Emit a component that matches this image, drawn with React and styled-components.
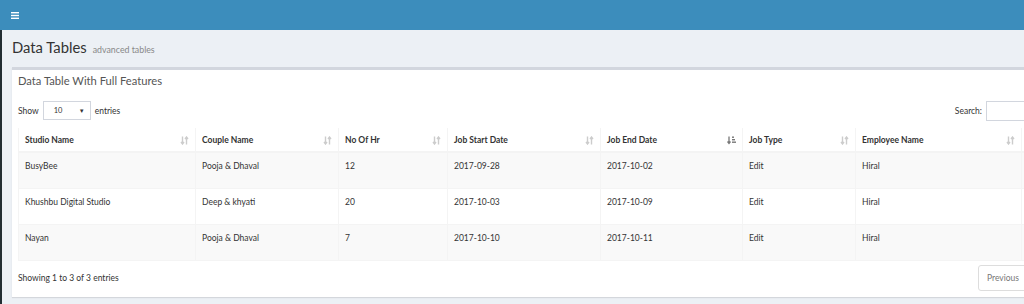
import React from "react";
import styled, { createGlobalStyle } from "styled-components";

const GlobalStyle = createGlobalStyle`
  html, body { margin: 0; padding: 0; overflow: hidden; }
  body {
    background: #ecf0f5;
    font-family: Lato, "Liberation Sans", sans-serif;
    color: #333;
    width: 1024px;
  }
`;

const Page = styled.div`
  width: 1120px;
  display: flex;
  flex-direction: column;
`;

const TopBar = styled.header`
  height: 30px;
  background: #3c8dbc;
  display: flex;
  align-items: center;
  padding-left: 11px;
`;

const Body = styled.div`
  display: flex;
  height: 274px;
`;

const SideStrip = styled.aside`
  width: 2px;
  background: #222d32;
`;

const Content = styled.main`
  flex: 1;
  padding: 0 0 0 10px;
  display: flex;
  flex-direction: column;
`;

const ContentHeader = styled.div`
  display: flex;
  align-items: baseline;
  gap: 6px;
  height: 37px;
  padding-top: 8px;
  box-sizing: border-box;
`;

const H1 = styled.h1`
  margin: 0;
  font-size: 14.8px;
  font-weight: 400;
  color: #333;
`;

const Small = styled.small`
  font-size: 8.8px;
  color: #888;
`;

const Box = styled.section`
  background: #fff;
  border-top: 3px solid #d2d6de;
  box-shadow: 0 1px 1px rgba(0, 0, 0, 0.1);
  width: 1100px;
  height: 230px;
  box-sizing: border-box;
  display: flex;
  flex-direction: column;
`;

const BoxTitle = styled.h3`
  margin: 0;
  padding: 4px 6px 0;
  height: 28px;
  box-sizing: border-box;
  font-size: 11.2px;
  font-weight: 400;
  color: #555;
`;

const BoxBody = styled.div`
  padding: 0 6px;
  display: flex;
  flex-direction: column;
`;

const Controls = styled.div`
  display: flex;
  align-items: center;
  justify-content: space-between;
  height: 25px;
  margin-bottom: 5px;
  font-size: 8.5px;
  width: 1068px;
`;

const Label = styled.label`
  display: flex;
  align-items: center;
  gap: 4px;
`;

const Select = styled.div`
  width: 48px;
  height: 19px;
  box-sizing: border-box;
  border: 1px solid #d2d6de;
  display: flex;
  align-items: center;
  justify-content: space-between;
  padding: 0 5px 0 10px;
  font-size: 7.5px;
`;

const Caret = styled.span`
  font-size: 6px;
`;

const SearchInput = styled.div`
  width: 100px;
  height: 20px;
  box-sizing: border-box;
  border: 1px solid #d2d6de;
  background: #fff;
`;

const Table = styled.table`
  border-collapse: collapse;
  table-layout: fixed;
  width: 1090px;
  font-size: 8.5px;
`;

const Th = styled.th`
  text-align: left;
  font-weight: 700;
  color: #333;
  height: 24px;
  padding: 1px 6px 0;
  border: 1px solid #f4f4f4;
  border-bottom: 2px solid #f4f4f4;
  border-top: none;
  box-sizing: border-box;
`;

const ThInner = styled.div`
  display: flex;
  align-items: center;
  justify-content: space-between;
`;

const Tr = styled.tr`
  background: ${(p) => (p.$striped ? "#f9f9f9" : "#fff")};
`;

const Td = styled.td`
  height: 36px;
  padding: 7px 6px 0;
  vertical-align: top;
  border: 1px solid #f4f4f4;
  box-sizing: border-box;
  color: #333;
  line-height: 12px;
`;

const Footer = styled.div`
  display: flex;
  align-items: center;
  justify-content: space-between;
  width: 1020px;
  height: 30px;
  margin-top: 2px;
  font-size: 8.5px;
`;

const PageButton = styled.button`
  font-family: inherit;
  font-size: 8.5px;
  color: #777;
  background: #fff;
  border: 1px solid #ddd;
  border-radius: 3px;
  height: 26px;
  width: 60px;
  text-align: left;
  padding: 0 0 0 8px;
`;

const Hamburger = () => (
  <svg width="8" height="7" viewBox="0 0 8 7">
    <rect x="0" y="0" width="8" height="1.4" fill="#fff" />
    <rect x="0" y="2.8" width="8" height="1.4" fill="#fff" />
    <rect x="0" y="5.6" width="8" height="1.4" fill="#fff" />
  </svg>
);

const SortIcon = ({ active }) =>
  active ? (
    <svg width="9" height="9" viewBox="0 0 9 9">
      <path d="M2 0.5v6.5M0.5 5.5L2 7.5L3.5 5.5" stroke="#777" strokeWidth="1.3" fill="none" />
      <rect x="5" y="0.5" width="2" height="1.4" fill="#777" />
      <rect x="5" y="3" width="3" height="1.4" fill="#777" />
      <rect x="5" y="5.5" width="4" height="1.4" fill="#777" />
    </svg>
  ) : (
    <svg width="9" height="9" viewBox="0 0 9 9">
      <path d="M2.5 0.5v7M1 6L2.5 8L4 6" stroke="#ccc" strokeWidth="1.4" fill="none" />
      <path d="M6.5 8.5v-7M5 3L6.5 1L8 3" stroke="#ccc" strokeWidth="1.4" fill="none" />
    </svg>
  );

const columns = [
  { name: "Studio Name", w: 177 },
  { name: "Couple Name", w: 143 },
  { name: "No Of Hr", w: 109 },
  { name: "Job Start Date", w: 153 },
  { name: "Job End Date", w: 142, active: true },
  { name: "Job Type", w: 113 },
  { name: "Employee Name", w: 166 },
  { name: "", w: 87 },
];

const rows = [
  ["BusyBee", "Pooja & Dhaval", "12", "2017-09-28", "2017-10-02", "Edit", "Hiral", ""],
  ["Khushbu Digital Studio", "Deep & khyati", "20", "2017-10-03", "2017-10-09", "Edit", "Hiral", ""],
  ["Nayan", "Pooja & Dhaval", "7", "2017-10-10", "2017-10-11", "Edit", "Hiral", ""],
];

export default function App() {
  return (
    <Page>
      <GlobalStyle />
      <TopBar>
        <Hamburger />
      </TopBar>
      <Body>
        <SideStrip />
        <Content>
          <ContentHeader>
            <H1>Data Tables</H1>
            <Small>advanced tables</Small>
          </ContentHeader>
          <Box>
            <BoxTitle>Data Table With Full Features</BoxTitle>
            <BoxBody>
              <Controls>
                <Label>
                  Show
                  <Select>
                    10 <Caret>▼</Caret>
                  </Select>
                  entries
                </Label>
                <Label>
                  Search:
                  <SearchInput />
                </Label>
              </Controls>
              <Table>
                <colgroup>
                  {columns.map((c, i) => (
                    <col key={i} style={{ width: c.w }} />
                  ))}
                </colgroup>
                <thead>
                  <tr>
                    {columns.map((c, i) => (
                      <Th key={i}>
                        <ThInner>
                          <span>{c.name}</span>
                          <SortIcon active={c.active} />
                        </ThInner>
                      </Th>
                    ))}
                  </tr>
                </thead>
                <tbody>
                  {rows.map((r, i) => (
                    <Tr key={i} $striped={i % 2 === 0}>
                      {r.map((v, j) => (
                        <Td key={j}>{v}</Td>
                      ))}
                    </Tr>
                  ))}
                </tbody>
              </Table>
              <Footer>
                <span>Showing 1 to 3 of 3 entries</span>
                <PageButton>Previous</PageButton>
              </Footer>
            </BoxBody>
          </Box>
        </Content>
      </Body>
    </Page>
  );
}
